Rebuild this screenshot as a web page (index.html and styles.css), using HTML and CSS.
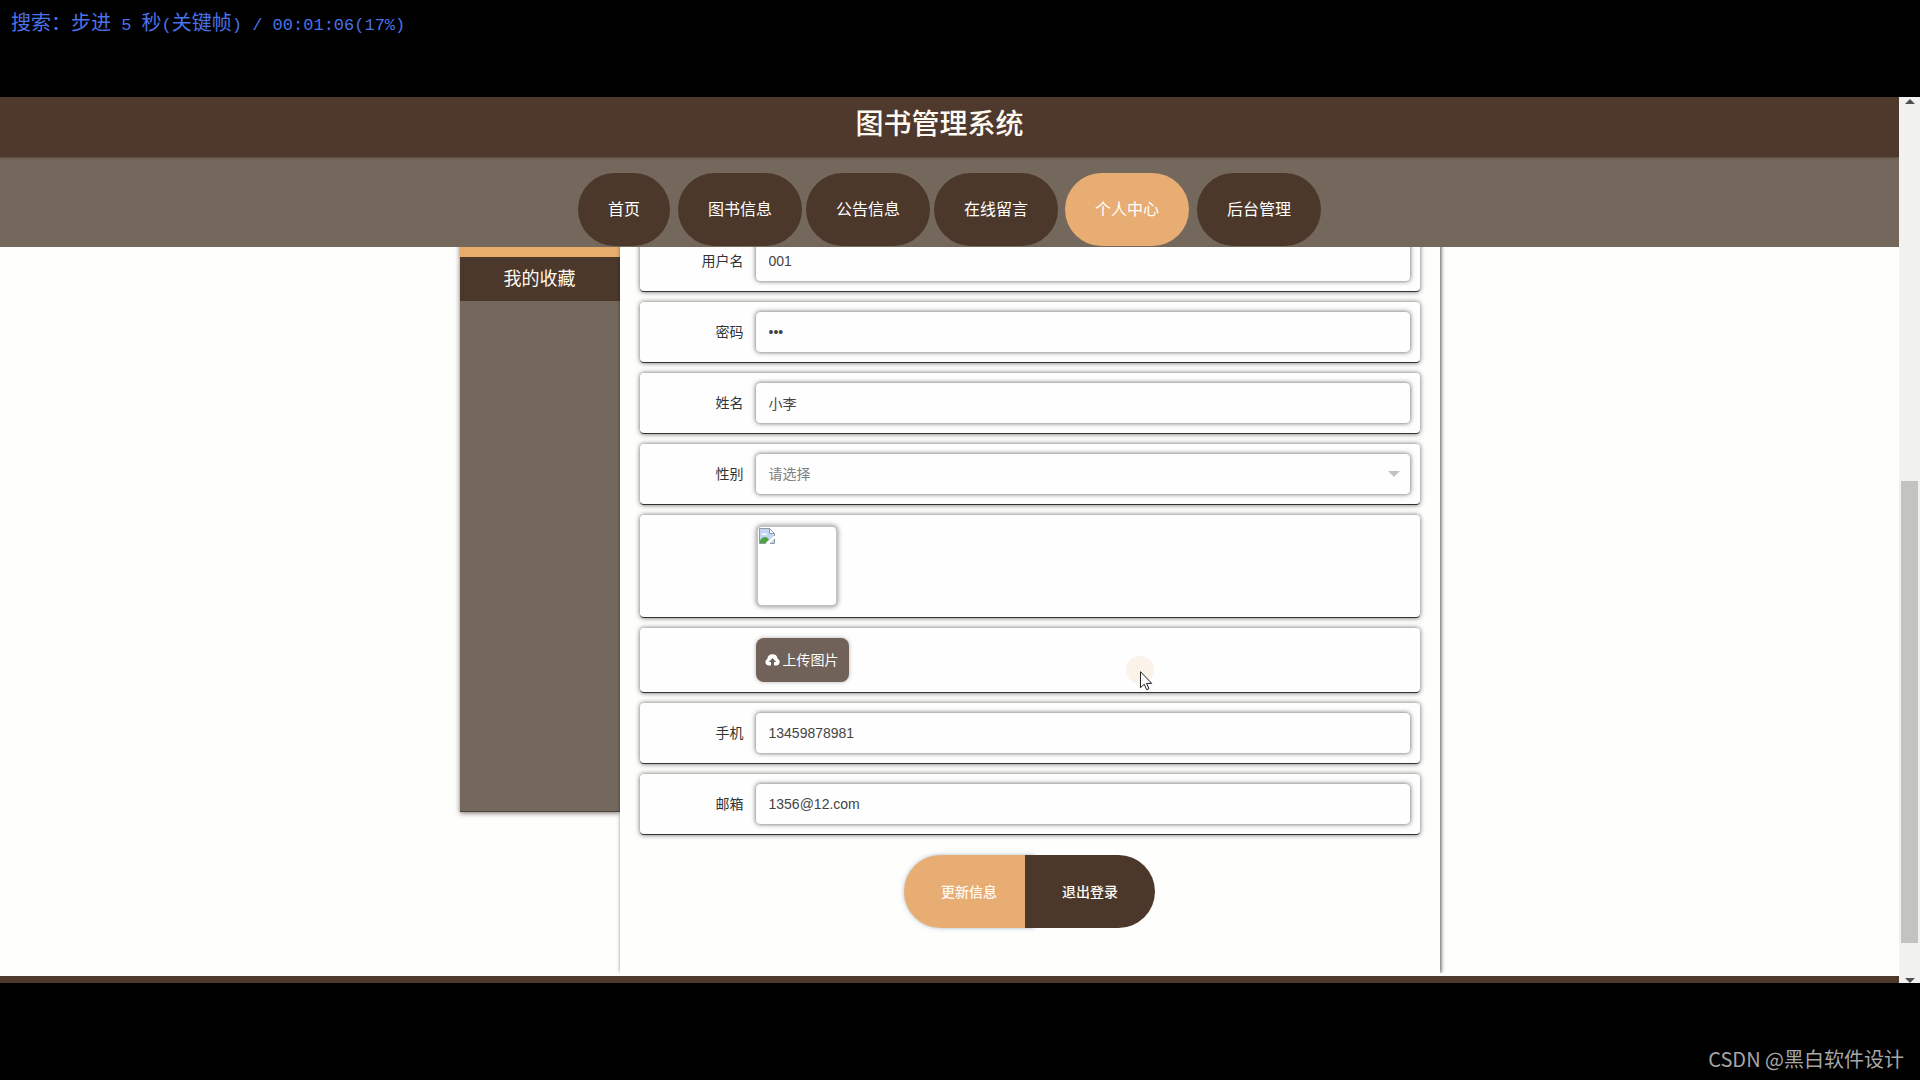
FILE: index.html
```html
<!DOCTYPE html>
<html lang="zh-CN">
<head>
<meta charset="utf-8">
<title>图书管理系统</title>
<link rel="stylesheet" href="styles.css">
</head>
<body>
<div class="status">搜索：步进<span class="mono"> 5 </span>秒<span class="mono">(</span>关键帧<span class="mono">) / 00:01:06(17%)</span></div>

<div class="screen">
  <div class="page">
    <header class="header"><h1 class="title">图书管理系统</h1></header>
    <nav class="nav">
      <a class="nav-link wide-gap" href="#">首页</a>
      <a class="nav-link" href="#">图书信息</a>
      <a class="nav-link" href="#">公告信息</a>
      <a class="nav-link" href="#">在线留言</a>
      <a class="nav-link wide-gap active" href="#">个人中心</a>
      <a class="nav-link" href="#">后台管理</a>
    </nav>

    <div class="viewport">
      <div class="layout">
        <aside class="sidebar">
          <a class="side-link current" href="#"></a>
          <a class="side-link" href="#">我的收藏</a>
        </aside>
        <main class="main">
          <form class="form">
            <div class="row">
              <label class="label" for="account">用户名</label>
              <input class="field" id="account" type="text" value="001">
            </div>
            <div class="row">
              <label class="label" for="password">密码</label>
              <input class="field" id="password" type="password" value="001">
            </div>
            <div class="row">
              <label class="label" for="name">姓名</label>
              <input class="field" id="name" type="text" value="小李">
            </div>
            <div class="row">
              <label class="label" for="gender">性别</label>
              <div class="select-box">
                <select class="field placeholder" id="gender">
                  <option>请选择</option>
                  <option>男</option>
                  <option>女</option>
                </select>
              </div>
            </div>
            <div class="row">
              <span class="label"></span>
              <div class="avatar">
                <svg width="16" height="16" viewBox="0 0 16 16" aria-hidden="true">
                  <path d="M.5.5h10l5 5v10H.5z" fill="#fff"/>
                  <path d="M1 1h9.500v5H15v9H1z" fill="#c3d4f6"/>
                  <path d="M3 6.500c0-1.500 2-2 2.600-.8 1-.7 2.400 0 2.400 1.300H3z" fill="#fff"/>
                  <path d="M1 15v-2.500C3 9.500 6 8 8 9.500l2 2L6.500 15z" fill="#4da33c"/>
                  <path d="M6 16L16 7v3l-6 6z" fill="#fff"/>
                  <path d="M.5 15.500V.5h10l5 5V8M.5 15.500H7M10.500.5v5h5M11 15.500h4.500V11" fill="none" stroke="#8c9aa5"/>
                </svg>
              </div>
            </div>
            <div class="row upload-row">
              <span class="label"></span>
              <button class="upload" type="button">
                <svg width="15" height="12" viewBox="0 0 15 12" aria-hidden="true">
                  <path d="M3.600 11.500A3.500 3.500 0 0 1 2.300 4.900 5.200 5.200 0 0 1 12.600 4.800 3.500 3.500 0 0 1 11.500 11.500H9V8h2.200L7.500 4 3.800 8H6v3.500z" fill="#fff"/>
                </svg>
                上传图片
              </button>
              <span class="pointer">
                <svg width="13" height="20" viewBox="0 0 13 20" aria-hidden="true">
                  <path d="M.5.7v16l3.700-3.500 2.500 5.500 2.300-1-2.500-5.300h5.200z" fill="#fff" stroke="#222"/>
                </svg>
              </span>
            </div>
            <div class="row">
              <label class="label" for="phone">手机</label>
              <input class="field" id="phone" type="text" value="13459878981">
            </div>
            <div class="row">
              <label class="label" for="email">邮箱</label>
              <input class="field" id="email" type="text" value="1356@12.com">
            </div>
            <div class="actions">
              <button class="action update" type="button">更新信息</button>
              <button class="action logout" type="button">退出登录</button>
            </div>
          </form>
        </main>
      </div>
    </div>
    <footer class="footer"></footer>
  </div>

  <div class="scrollbar" aria-hidden="true">
    <span class="arrow up"></span>
    <span class="track-before"></span>
    <span class="thumb"></span>
    <span class="track-after"></span>
    <span class="arrow down"></span>
  </div>
</div>

<div class="credit">CSDN @黑白软件设计</div>
</body>
</html>
```

FILE: styles.css
```css
* {
  box-sizing: border-box;
}

body {
  margin: 0;
  min-height: 100vh;
  display: flex;
  flex-direction: column;
  background: #000;
  color: #333;
  font: 14px/20px "Liberation Sans", "Noto Sans CJK SC", sans-serif;
}

a {
  color: inherit;
  text-decoration: none;
}

/* player bars above and below the page */
.status {
  height: 97px;
  padding: 7px 11px;
  color: #4a72ea;
  font: 20px/30px "Noto Sans CJK SC", sans-serif;
}

.mono {
  font-family: "Liberation Mono", monospace;
  font-size: 17px;
  white-space: pre;
}

.credit {
  height: 97px;
  padding: 61px 16px 0;
  color: #a6a6a6;
  font: 20px/30px "Noto Sans CJK SC", sans-serif;
  text-align: right;
}

.screen {
  flex: 1;
  display: flex;
}

.page {
  flex: 1;
  display: flex;
  flex-direction: column;
  background: #fefefd;
}

.header {
  height: 60px;
  padding: 8px 20px 0 0;
  background: #4e392c;
  text-align: center;
}

.title {
  margin: 0;
  color: #fffaf2;
  font-size: 28px;
  font-weight: 500;
  line-height: 40px;
}

.nav {
  height: 90px;
  display: flex;
  justify-content: center;
  gap: 4px;
  padding-top: 16px;
  background: #74675b;
  box-shadow: inset 0 3px 2px -2px rgba(78, 57, 44, 0.6);
}

.nav-link {
  height: 73px;
  padding: 0 30px;
  border-radius: 37px;
  background: #4c382b;
  color: #fff;
  font-size: 16px;
  line-height: 73px;
}

.nav-link.wide-gap {
  margin-right: 4px;
}

.nav-link.active {
  margin-left: 3px;
  background: #e8ad72;
}

/* visible part of the scrolled page */
.viewport {
  flex: 1;
  margin-bottom: 3px;
  overflow: hidden;
}

.layout {
  display: flex;
  align-items: flex-start;
  width: 980px;
  max-width: 100%;
  margin: -34px auto 0;
}

.sidebar {
  width: 160px;
  min-height: 599px;
  border-bottom: 1px solid #4a4340;
  background: #74685c;
  box-shadow: 0 1px 5px rgba(60, 40, 40, 0.7);
}

.side-link {
  display: block;
  height: 44px;
  background: #4c382b;
  color: #fffaf2;
  font-size: 18px;
  line-height: 44px;
  text-align: center;
}

.side-link.current {
  background: #e8ad6b;
}

.main {
  position: relative;
  flex: 1;
  padding: 18px 20px 45px;
  background: #fefefd;
  box-shadow: 1px 0 4px rgba(0, 0, 0, 0.7);
}

.form {
  display: flex;
  flex-direction: column;
  gap: 10px;
}

.row {
  display: flex;
  align-items: center;
  gap: 12px;
  padding: 10px 10px 10px 0;
  border-bottom: 1px solid #333;
  border-radius: 4px;
  background: #fefefe;
  box-shadow: 0 0 5px rgba(0, 0, 0, 0.6);
}

.label {
  width: 104px;
  text-align: right;
}

.field {
  flex: 1;
  width: 100%;
  height: 40px;
  padding: 0 12px;
  border: 1px solid #fefefe;
  border-radius: 4px;
  background: #fefefe;
  box-shadow: 0 0 5px rgba(0, 0, 0, 0.65);
  color: #444;
  font: inherit;
  appearance: none;
}

.select-box {
  position: relative;
  flex: 1;
  display: flex;
}

.select-box::after {
  content: "";
  position: absolute;
  top: 17px;
  right: 10px;
  border: 6px solid transparent;
  border-top-color: #c2c2c2;
  border-bottom-width: 0;
}

.placeholder {
  color: #808080;
}

.avatar {
  width: 82px;
  height: 82px;
  padding: 1px;
  border: 2px solid #c4c4c4;
  border-radius: 6px;
  background: #fff;
  box-shadow: 0 0 5px rgba(0, 0, 0, 0.4);
}

.avatar svg {
  display: block;
}

.upload-row {
  position: relative;
}

.upload {
  height: 44px;
  display: flex;
  align-items: center;
  gap: 3px;
  padding: 0 10px 0 9px;
  border: 0;
  border-radius: 8px;
  background: #716259;
  box-shadow: 0 0 4px rgba(0, 0, 0, 0.3);
  color: #fff;
  font: inherit;
}

/* mouse pointer with its click halo */
.pointer {
  position: absolute;
  top: 28px;
  left: 486px;
  width: 28px;
  height: 28px;
  padding: 15px 0 0 14px;
  border-radius: 50%;
  background: #fbf3ea;
}

.pointer svg {
  display: block;
}

.actions {
  display: flex;
  justify-content: center;
  padding-top: 10px;
}

.action {
  height: 73px;
  padding: 0 37px;
  border: 0;
  color: #fffaf2;
  font: inherit;
  font-weight: 500;
}

.update {
  border-radius: 37px 0 0 37px;
  background: #e8ad72;
  box-shadow: 0 0 4px rgba(90, 120, 140, 0.5);
}

.logout {
  position: relative;
  margin-left: -9px;
  border-radius: 0 37px 37px 0;
  background: #4c382b;
}

.footer {
  height: 7px;
  background: #4e392c;
}

.scrollbar {
  width: 21px;
  display: flex;
  flex-direction: column;
  align-items: center;
  background: #f1f1f0;
}

.arrow {
  border: 5px solid transparent;
}

.up {
  margin-top: 2px;
  border-top-width: 0;
  border-bottom-color: #505050;
}

.down {
  border-bottom-width: 0;
  border-top-color: #505050;
}

.track-before {
  flex: 377;
}

.thumb {
  flex: 462;
  width: 17px;
  background: #c3c3c2;
}

.track-after {
  flex: 35;
}
```
